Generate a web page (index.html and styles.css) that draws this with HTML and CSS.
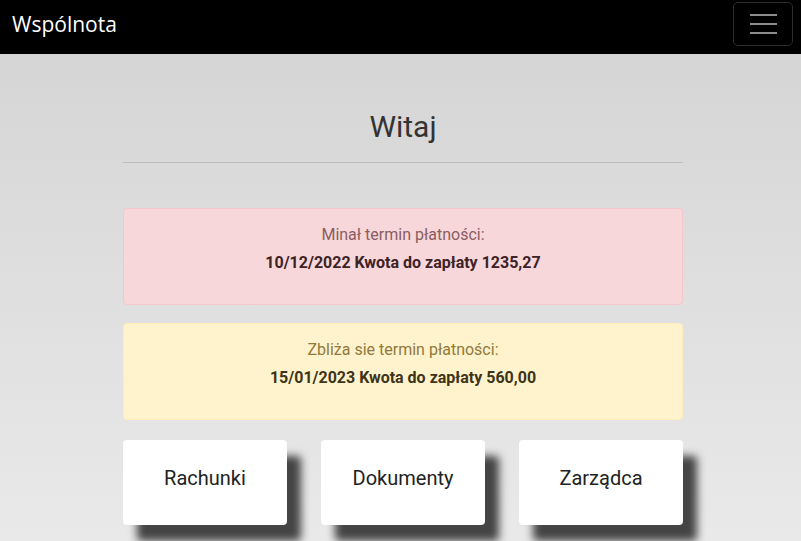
FILE: index.html
```html
<!DOCTYPE html>
<html lang="pl">
<head>
<meta charset="utf-8">
<title>Wspólnota</title>
<link rel="stylesheet" href="styles.css">
</head>
<body>
<nav class="navbar">
  <span class="brand">Wspólnota</span>
  <button class="toggler" aria-label="Menu">
    <span class="bar"></span><span class="bar"></span><span class="bar"></span>
  </button>
</nav>
<main class="content">
  <h1 class="title">Witaj</h1>
  <hr class="rule">
  <div class="alert alert-danger">
    <div class="line">Minał termin płatności:</div>
    <div class="line strong">10/12/2022 Kwota do zapłaty 1235,27</div>
  </div>
  <div class="alert alert-warning">
    <div class="line">Zbliża sie termin płatności:</div>
    <div class="line strong">15/01/2023 Kwota do zapłaty 560,00</div>
  </div>
  <div class="tiles">
    <a class="tile">Rachunki</a>
    <a class="tile">Dokumenty</a>
    <a class="tile">Zarządca</a>
  </div>
</main>
</body>
</html>
```

FILE: styles.css
```css
* { box-sizing: border-box; }
html, body { height: 100%; }
body {
  margin: 0;
  font-family: Roboto, "Liberation Sans", sans-serif;
  background: linear-gradient(180deg, #d3d3d3 0%, #e9e9e9 100%);
  color: #333;
  overflow: hidden;
}
.navbar {
  height: 54px;
  background: #000;
  display: flex;
  align-items: flex-start;
  justify-content: space-between;
  padding: 0 8px 0 12px;
}
.brand {
  color: #fff;
  font-family: "Open Sans", "Noto Sans", sans-serif;
  font-size: 21px;
  line-height: 24px;
  margin-top: 12px;
}
.toggler {
  margin-top: 2px;
  width: 60px;
  height: 44px;
  background: transparent;
  border: 1px solid #2c2c2c;
  border-radius: 5px;
  display: flex;
  flex-direction: column;
  align-items: center;
  justify-content: center;
  gap: 7px;
  padding: 0;
}
.bar {
  display: block;
  width: 27px;
  height: 2px;
  background: #8c8c8c;
}
.content {
  width: 565px;
  padding-left: 5px;
  margin: 0 auto;
  padding-top: 52px;
}
.title {
  margin: 0;
  text-align: center;
  font-weight: 400;
  font-size: 30px;
  line-height: 42px;
  color: #333;
}
.rule {
  margin: 14px 0 45px;
  border: 0;
  border-top: 1px solid #bdbdbd;
}
.alert {
  border: 1px solid;
  border-radius: 4px;
  text-align: center;
  padding: 12px 16px 27px;
  font-size: 16px;
  line-height: 28px;
  margin-bottom: 18px;
}
.alert-danger {
  background: #f8d7da;
  border-color: #f5c6cb;
  color: #8a5d62;
}
.alert-danger .strong { color: #3d2326; }
.alert-warning {
  background: #fff3cd;
  border-color: #ffeeba;
  color: #8f7a3c;
}
.alert-warning .strong { color: #3e3418; }
.strong { font-weight: 700; }
.tiles {
  display: flex;
  justify-content: space-between;
  margin-top: 20px;
}
.tile {
  width: 164px;
  height: 85px;
  background: #fff;
  border-radius: 4px;
  box-shadow: 14px 16px 8px #444;
  display: flex;
  align-items: center;
  justify-content: center;
  padding-bottom: 10px;
  font-size: 20px;
  color: #222;
}
```
